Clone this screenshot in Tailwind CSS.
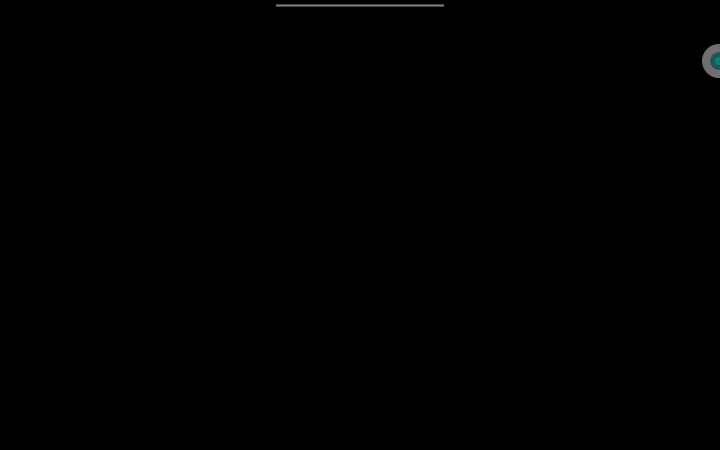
<!DOCTYPE html>
<html lang="en">
<head>
    <meta charset="UTF-8">
    <meta name="viewport" content="width=device-width, initial-scale=1.0">
    <title>Screen</title>
    <script src="https://cdn.jsdelivr.net/npm/@tailwindcss/browser@4"></script>
</head>
<body class="bg-black">
    <div class="relative w-[720px] h-[450px] overflow-hidden bg-black">
        <!-- top handle -->
        <div class="flex justify-center pt-1">
            <div class="w-[168px] h-[3px] bg-[#7c7c7c] border-y border-[#4a4a4a]"></div>
        </div>

        <!-- floating button, cut off by the right edge -->
        <div class="absolute left-[702px] top-[44px] w-[34px] h-[34px] rounded-full bg-[#6f6f6f] flex items-center justify-center">
            <div class="w-[18px] h-[18px] rounded-full bg-[#3c4a49] flex items-center justify-center">
                <div class="w-[14px] h-[14px] rounded-full bg-[#0c5f5a] flex items-center justify-center">
                    <div class="w-[8px] h-[8px] rounded-full bg-[#127a72]"></div>
                </div>
            </div>
        </div>
    </div>
</body>
</html>
